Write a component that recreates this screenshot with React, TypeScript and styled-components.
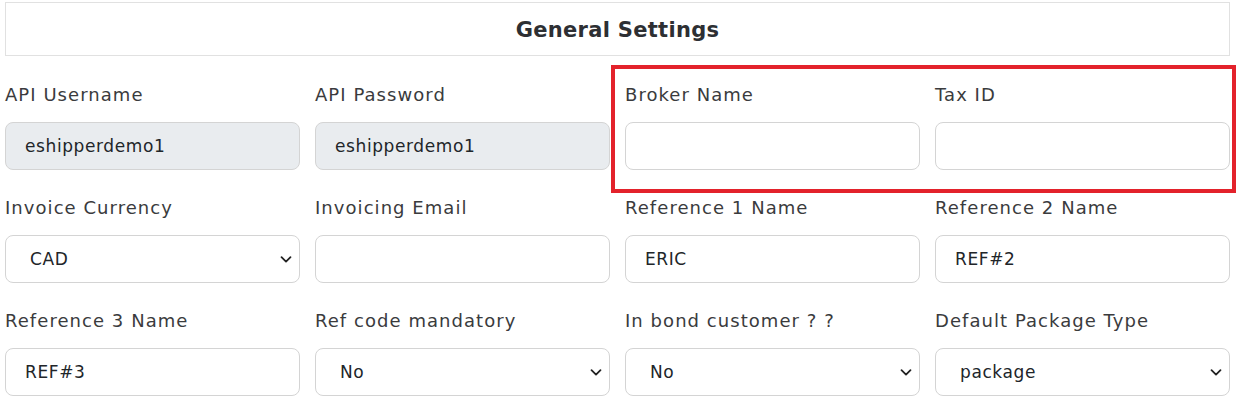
import React from "react";
import styled, { createGlobalStyle } from "styled-components";

const Global = createGlobalStyle`
  body {
    margin: 0;
    background: #ffffff;
    font-family: "DejaVu Sans", "Liberation Sans", sans-serif;
    color: #333333;
  }
`;

const Page = styled.div`
  width: 1225px;
  padding: 2px 7px 0 5px;
  position: relative;
`;

const Header = styled.div`
  height: 52px;
  border: 1px solid #e1e1e1;
  display: flex;
  align-items: center;
  justify-content: center;
  font-size: 21px;
  font-weight: 600;
  color: #2d2f33;
  letter-spacing: 0.3px;
  padding-top: 2px;
  box-sizing: content-box;
  height: 50px;
`;

const Grid = styled.div`
  display: grid;
  grid-template-columns: repeat(4, 295px);
  column-gap: 15px;
  row-gap: 25px;
  margin-top: 26px;
  position: relative;
`;

const Field = styled.div`
  display: flex;
  flex-direction: column;
`;

const Label = styled.label`
  font-size: 18px;
  line-height: 26px;
  height: 26px;
  margin-bottom: 14px;
  color: #3a3b3d;
  letter-spacing: 1.05px;
  white-space: nowrap;
`;

const Input = styled.input<{ $disabled?: boolean }>`
  box-sizing: border-box;
  height: 48px;
  width: 100%;
  border: 1px solid #d4d4d4;
  border-radius: 8px;
  padding: 0 19px;
  font-family: inherit;
  font-size: 17px;
  letter-spacing: 0.6px;
  color: #212529;
  background: ${p => (p.$disabled ? "#e9ecef" : "#ffffff")};
  outline: none;
`;

const SelectWrap = styled.div`
  position: relative;
`;

const Select = styled.select`
  appearance: none;
  box-sizing: border-box;
  height: 48px;
  width: 100%;
  border: 1px solid #d4d4d4;
  border-radius: 8px;
  padding: 0 40px 0 24px;
  font-family: inherit;
  font-size: 17px;
  letter-spacing: 0.6px;
  color: #212529;
  background: #ffffff;
  outline: none;
`;

const Chevron = styled.svg`
  position: absolute;
  right: 8px;
  top: 18px;
  width: 12px;
  height: 12px;
  pointer-events: none;
`;

const Highlight = styled.div`
  position: absolute;
  left: 606px;
  top: -17px;
  width: 617px;
  height: 120px;
  border: 4px solid #e3222b;
  pointer-events: none;
`;

type Item =
  | { kind: "input"; label: string; value: string; disabled?: boolean }
  | { kind: "select"; label: string; value: string };

const items: Item[] = [
  { kind: "input", label: "API Username", value: "eshipperdemo1", disabled: true },
  { kind: "input", label: "API Password", value: "eshipperdemo1", disabled: true },
  { kind: "input", label: "Broker Name", value: "" },
  { kind: "input", label: "Tax ID", value: "" },
  { kind: "select", label: "Invoice Currency", value: "CAD" },
  { kind: "input", label: "Invoicing Email", value: "" },
  { kind: "input", label: "Reference 1 Name", value: "ERIC" },
  { kind: "input", label: "Reference 2 Name", value: "REF#2" },
  { kind: "input", label: "Reference 3 Name", value: "REF#3" },
  { kind: "select", label: "Ref code mandatory", value: "No" },
  { kind: "select", label: "In bond customer ? ?", value: "No" },
  { kind: "select", label: "Default Package Type", value: "package" },
];

const SelectBox: React.FC<{ value: string }> = ({ value }) => (
  <SelectWrap>
    <Select defaultValue={value}>
      <option value={value}>{value}</option>
    </Select>
    <Chevron viewBox="0 0 16 16" fill="none">
      <path d="M2 5.5l6 6 6-6" stroke="#222" strokeWidth="2.4" strokeLinecap="round" strokeLinejoin="round" />
    </Chevron>
  </SelectWrap>
);

const App: React.FC = () => (
  <>
    <Global />
    <Page>
      <Header>General Settings</Header>
      <Grid>
        {items.map(item => (
          <Field key={item.label}>
            <Label>{item.label}</Label>
            {item.kind === "select" ? (
              <SelectBox value={item.value} />
            ) : (
              <Input
                $disabled={item.disabled}
                disabled={item.disabled}
                defaultValue={item.value}
              />
            )}
          </Field>
        ))}
        <Highlight />
      </Grid>
    </Page>
  </>
);

export default App;
